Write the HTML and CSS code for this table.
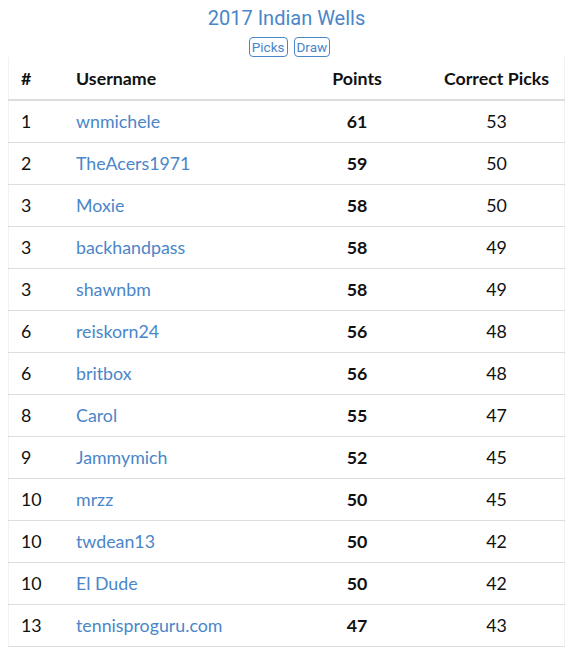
FILE: index.html
```html
<!DOCTYPE html>
<html>
<head>
<meta charset="utf-8">
<link rel="stylesheet" href="styles.css">
</head>
<body>
<div class="page">
  <h1 class="title">2017 Indian Wells</h1>
  <div class="tabs">
    <a class="tab">Picks</a>
    <a class="tab">Draw</a>
  </div>
  <table class="board">
    <thead>
      <tr><th class="c-rank">#</th><th class="c-user">Username</th><th class="c-pts">Points</th><th class="c-cor">Correct Picks</th></tr>
    </thead>
    <tbody>
      <tr><td>1</td><td><a>wnmichele</a></td><td class="c-pts">61</td><td class="c-cor">53</td></tr>
      <tr><td>2</td><td><a>TheAcers1971</a></td><td class="c-pts">59</td><td class="c-cor">50</td></tr>
      <tr><td>3</td><td><a>Moxie</a></td><td class="c-pts">58</td><td class="c-cor">50</td></tr>
      <tr><td>3</td><td><a>backhandpass</a></td><td class="c-pts">58</td><td class="c-cor">49</td></tr>
      <tr><td>3</td><td><a>shawnbm</a></td><td class="c-pts">58</td><td class="c-cor">49</td></tr>
      <tr><td>6</td><td><a>reiskorn24</a></td><td class="c-pts">56</td><td class="c-cor">48</td></tr>
      <tr><td>6</td><td><a>britbox</a></td><td class="c-pts">56</td><td class="c-cor">48</td></tr>
      <tr><td>8</td><td><a>Carol</a></td><td class="c-pts">55</td><td class="c-cor">47</td></tr>
      <tr><td>9</td><td><a>Jammymich</a></td><td class="c-pts">52</td><td class="c-cor">45</td></tr>
      <tr><td>10</td><td><a>mrzz</a></td><td class="c-pts">50</td><td class="c-cor">45</td></tr>
      <tr><td>10</td><td><a>twdean13</a></td><td class="c-pts">50</td><td class="c-cor">42</td></tr>
      <tr><td>10</td><td><a>El Dude</a></td><td class="c-pts">50</td><td class="c-cor">42</td></tr>
      <tr><td>13</td><td><a>tennisproguru.com</a></td><td class="c-pts">47</td><td class="c-cor">43</td></tr>
    </tbody>
  </table>
</div>
</body>
</html>
```

FILE: styles.css
```css
html, body {
  margin: 0;
  padding: 0;
  background: #fff;
}
body {
  padding: 0 8px;
  font-family: Lato, "Liberation Sans", sans-serif;
  color: #111;
}
.page {
  display: flex;
  flex-direction: column;
  align-items: center;
}
.title {
  margin: 5px 0 0;
  font-family: Roboto, "Liberation Sans", sans-serif;
  font-weight: 400;
  font-size: 20px;
  line-height: 26px;
  color: #4a86c8;
}
.tabs {
  display: flex;
  gap: 6px;
  margin-top: 6px;
  margin-left: 6px;
}
.tab {
  font-family: Roboto, "Liberation Sans", sans-serif;
  font-size: 13.5px;
  line-height: 18px;
  color: #4a86c8;
  border: 1px solid #4a86c8;
  border-radius: 4px;
  padding: 0 2px;
}
.board {
  width: 100%;
  border-collapse: collapse;
  margin-top: 0;
  border-left: 1px solid #f2f2f2;
  border-right: 1px solid #f2f2f2;
  font-size: 17.8px;
}
.board th {
  font-weight: 700;
  text-align: left;
  height: 42px;
  padding: 0 12px;
  border-bottom: 2px solid #ddd;
  font-size: 17.8px;
  color: #111;
}
.board td {
  height: 40px;
  padding: 0 12px 1px;
  border-bottom: 1px solid #ddd;
  color: #111;
}
.board .c-rank { width: 31px; }
.board .c-pts { text-align: center; width: 120px; }
.board td.c-pts { font-weight: 700; }
.board .c-cor { text-align: center; width: 111px; }
.board a {
  color: #4a86c8;
  text-decoration: none;
}
```
